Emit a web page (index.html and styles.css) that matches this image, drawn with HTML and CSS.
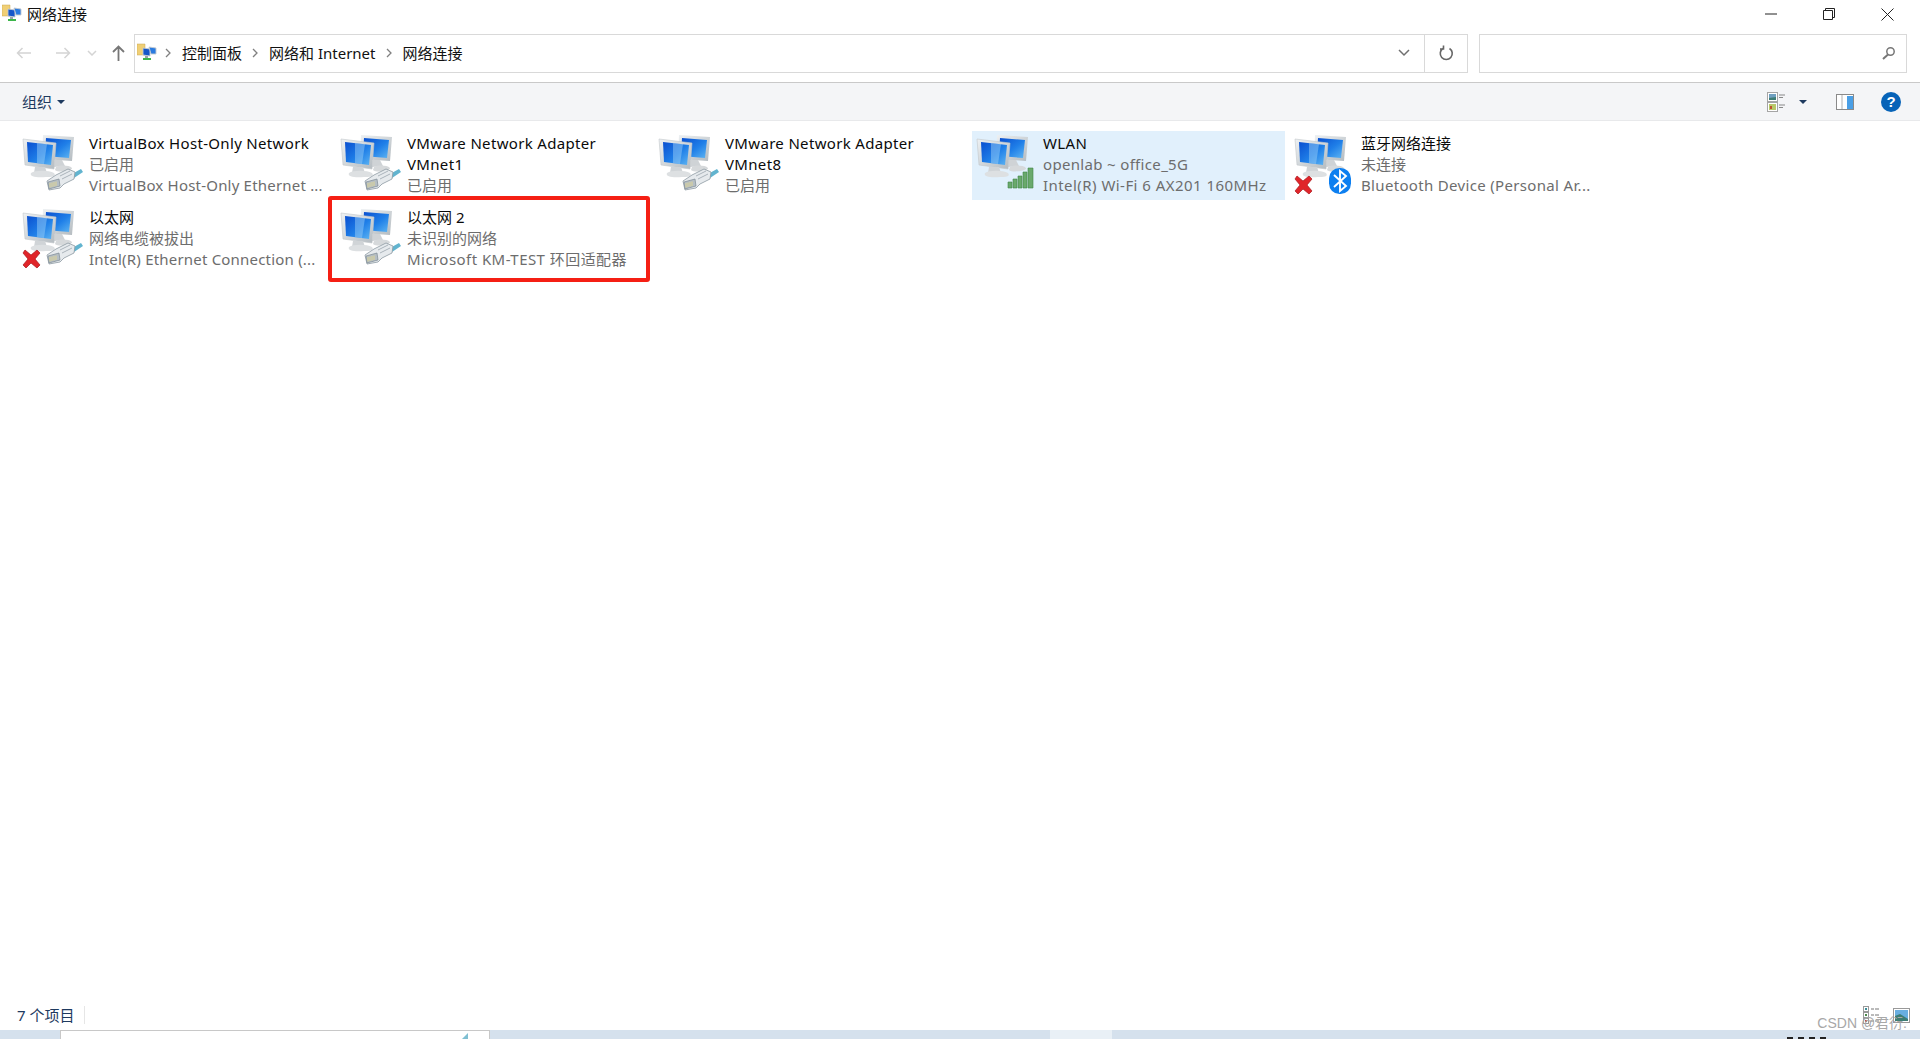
FILE: index.html
```html
<!DOCTYPE html>
<html lang="zh-CN">
<head>
<meta charset="utf-8">
<title>网络连接</title>
<link rel="stylesheet" href="styles.css">
</head>
<body>
<svg class="defs" width="0" height="0" aria-hidden="true">
  <defs>
    <linearGradient id="scr" x1="0" y1="0" x2="1" y2="1">
      <stop offset="0" stop-color="#0a4fd0"/><stop offset=".55" stop-color="#1f7fe8"/><stop offset="1" stop-color="#5db4f2"/>
    </linearGradient>
    <linearGradient id="frm" x1="0" y1="0" x2="1" y2="1">
      <stop offset="0" stop-color="#eef1f3"/><stop offset="1" stop-color="#b4bbc0"/>
    </linearGradient>
    <symbol id="pcs" viewBox="0 0 67 62">
      <path d="M21 1 52 3 50 27 20 25Z" fill="url(#frm)"/>
      <path d="M24 4 49 6 47 24 23 22Z" fill="url(#scr)"/>
      <path d="M33 26h7l3 6-11 1Z" fill="#cfd3d6"/>
      <path d="M34 33c4-2 13-2 16 1 1 3-14 5-17 2Z" fill="#d6d9db"/>
      <path d="M1 5 34 9 32 35 3 31Z" fill="url(#frm)" stroke="#c2c7cb" stroke-width=".6"/>
      <path d="M5 8 31 11 29 31 6 28Z" fill="url(#scr)"/>
      <path d="M15 9 25 10 22 30 15 29Z" fill="#a5d5f8" opacity=".45"/>
      <path d="M13 33h10l2 6H12Z" fill="#d0d4d7"/>
      <path d="M9 39c4-3 18-3 23 0 3 4-3 4-8 4-8 1-17 0-15-4Z" fill="#dde0e2"/>
    </symbol>
    <symbol id="plug" viewBox="0 0 67 62">
      <path d="M50 40 59 35 61 38 52 44Z" fill="#62b4cf"/>
      <path d="M34 41 46 35 53 38 52 45 42 50 38 54 27 56 25 47Z" fill="#e6eaed" stroke="#8d99a2" stroke-width=".8"/>
      <path d="M26 48 37 45 38 52 27 55Z" fill="#b5bec4" stroke="#7d8a94" stroke-width=".7"/>
      <path d="M28 49v4.500M30 48.500v4.500M32 48v4.500M34 47.500v4.500" stroke="#e8d98a" stroke-width=".8"/>
      <path d="M38 42 48 37M40 45 50 40" stroke="#9aa5ad" stroke-width=".8"/>
    </symbol>
    <symbol id="cross" viewBox="0 0 67 62">
      <path d="M3 42 9 47 15 42 18 45 13 51 18 57 15 60 9 55 4 60 1 57 6 51 1 45Z" fill="#e0252a" stroke="#a9181c" stroke-width=".7"/>
    </symbol>
    <symbol id="bars" viewBox="0 0 67 62">
      <path d="M32 48h4v6h-4ZM37 45h4v9h-4ZM42 42h4v12h-4ZM47 38h4v16h-4ZM52 34h5v20h-5Z" fill="#6aa96c" stroke="#3f8646" stroke-width=".6"/>
    </symbol>
    <symbol id="bt" viewBox="0 0 67 62">
      <rect x="35" y="34" width="22" height="26" rx="10.500" fill="#0d7ff0"/>
      <path d="M40 41 52 52 46 57V37L52 42 40 53" fill="none" stroke="#fff" stroke-width="1.900"/>
    </symbol>
    <symbol id="small" viewBox="0 0 20 20">
      <path d="M0 1h8v11H0Z" fill="#f0cf75" stroke="#c9a550" stroke-width=".5"/>
      <path d="M6 5 13 6 13 13 6 12Z" fill="#1556c9" stroke="#c4cad0" stroke-width=".9"/>
      <path d="M12 4 19 5 19 11 14 11Z" fill="#2a7be0" stroke="#c4cad0" stroke-width=".9"/>
      <path d="M6 15h8v2H6Z" fill="#3cb54a"/>
      <path d="M8 13h3v2H8Z" fill="#9aa3aa"/>
    </symbol>
  </defs>
</svg>

<div class="window">
  <header class="titlebar">
    <svg class="small-icon"><use href="#small"/></svg>
    <span class="title">网络连接</span>
    <div class="winbtns">
      <span class="winbtn"><svg width="12" height="12" viewBox="0 0 12 12"><path d="M0 6h12" stroke="#222" fill="none"/></svg></span>
      <span class="winbtn"><svg width="12" height="12" viewBox="0 0 12 12"><path d="M.5 2.500h9v9h-9ZM2.500 2.500v-2h9v9h-2" stroke="#222" fill="none"/></svg></span>
      <span class="winbtn"><svg width="13" height="13" viewBox="0 0 13 13"><path d="M.5.5l12 12M12.500.5l-12 12" stroke="#222" fill="none"/></svg></span>
    </div>
  </header>

  <nav class="navbar">
    <div class="navbtns">
      <svg class="nav-back" width="16" height="12" viewBox="0 0 16 12"><path d="M15 6H1.500M6.500 1l-5 5 5 5" stroke="#d4d4d4" stroke-width="1.500" fill="none"/></svg>
      <svg class="nav-fwd" width="16" height="12" viewBox="0 0 16 12"><path d="M1 6h13.500M9.500 1l5 5-5 5" stroke="#d4d4d4" stroke-width="1.500" fill="none"/></svg>
      <svg class="nav-down" width="10" height="6" viewBox="0 0 10 6"><path d="M1 1l4 4 4-4" stroke="#d4d4d4" stroke-width="1.500" fill="none"/></svg>
      <svg class="nav-up" width="13" height="16" viewBox="0 0 13 16"><path d="M6.500 16V1.500M1 7l5.500-5.500L12 7" stroke="#777" stroke-width="1.800" fill="none"/></svg>
    </div>
    <div class="address">
      <svg class="small-icon addr-icon"><use href="#small"/></svg>
      <svg class="crumb-sep" width="6" height="10" viewBox="0 0 6 10"><path d="M1 1l4 4-4 4" stroke="#808080" stroke-width="1.300" fill="none"/></svg>
      <span class="crumb">控制面板</span>
      <svg class="crumb-sep" width="6" height="10" viewBox="0 0 6 10"><path d="M1 1l4 4-4 4" stroke="#808080" stroke-width="1.300" fill="none"/></svg>
      <span class="crumb">网络和 Internet</span>
      <svg class="crumb-sep" width="6" height="10" viewBox="0 0 6 10"><path d="M1 1l4 4-4 4" stroke="#808080" stroke-width="1.300" fill="none"/></svg>
      <span class="crumb">网络连接</span>
      <svg class="addr-drop" width="12" height="8" viewBox="0 0 12 8"><path d="M1 1l5 5 5-5" stroke="#707070" stroke-width="1.500" fill="none"/></svg>
      <span class="refresh"><svg width="15" height="16" viewBox="0 0 15 16"><path d="M4 3.500a6 6 0 1 0 6.500 0M4.500 .5v3.500H1" stroke="#666" stroke-width="1.600" fill="none"/></svg></span>
    </div>
    <div class="search">
      <svg width="14" height="14" viewBox="0 0 14 14"><circle cx="8.500" cy="5.500" r="3.700" stroke="#777" stroke-width="1.500" fill="none"/><path d="M6 8.500 1 13" stroke="#777" stroke-width="2" fill="none"/></svg>
    </div>
  </nav>

  <div class="toolbar">
    <span class="organize">组织</span>
    <i class="tri"></i>
    <div class="tools">
      <svg width="20" height="20" viewBox="0 0 20 20">
        <rect x=".5" y=".5" width="10" height="9" fill="#fff" stroke="#a5a5a5"/>
        <rect x="2" y="2" width="7" height="6" fill="#6f9fc0"/>
        <path d="M2 8V6l7-1v3Z" fill="#3d7d74"/>
        <rect x=".5" y="10.500" width="10" height="9" fill="#fff" stroke="#a5a5a5"/>
        <rect x="2" y="12" width="7" height="6" fill="#b8c86a"/>
        <path d="M3 14h2v3H3Z" fill="#c0522c"/>
        <path d="M12 3h6M12 5.500h4M12 13h6M12 15.500h4" stroke="#888"/>
      </svg>
      <i class="tri view-tri"></i>
      <svg class="pane" width="18" height="16" viewBox="0 0 18 16">
        <rect x=".5" y=".5" width="17" height="15" fill="#fff" stroke="#8a8a8a"/>
        <path d="M6 1v14" stroke="#b0b0b0"/>
        <rect x="11" y="2" width="6" height="13" fill="#4a9fe6"/>
      </svg>
      <span class="help">?</span>
    </div>
  </div>

  <main class="content">
    <article class="item">
      <svg class="icon"><use href="#pcs"/><use href="#plug"/></svg>
      <div class="text">
        <div class="name lat">VirtualBox Host-Only Network</div>
        <div class="sub">已启用</div>
        <div class="sub lat tight">VirtualBox Host-Only Ethernet ...</div>
      </div>
    </article>
    <article class="item">
      <svg class="icon"><use href="#pcs"/><use href="#plug"/></svg>
      <div class="text">
        <div class="name lat wrap">VMware Network Adapter VMnet1</div>
        <div class="sub">已启用</div>
      </div>
    </article>
    <article class="item">
      <svg class="icon"><use href="#pcs"/><use href="#plug"/></svg>
      <div class="text">
        <div class="name lat wrap">VMware Network Adapter VMnet8</div>
        <div class="sub">已启用</div>
      </div>
    </article>
    <article class="item selected">
      <svg class="icon"><use href="#pcs"/><use href="#bars"/></svg>
      <div class="text">
        <div class="name lat">WLAN</div>
        <div class="sub lat">openlab ~ office_5G</div>
        <div class="sub lat wide">Intel(R) Wi-Fi 6 AX201 160MHz</div>
      </div>
    </article>
    <article class="item">
      <svg class="icon"><use href="#pcs"/><use href="#cross"/><use href="#bt"/></svg>
      <div class="text">
        <div class="name">蓝牙网络连接</div>
        <div class="sub">未连接</div>
        <div class="sub lat">Bluetooth Device (Personal Ar...</div>
      </div>
    </article>
    <article class="item">
      <svg class="icon"><use href="#pcs"/><use href="#plug"/><use href="#cross"/></svg>
      <div class="text">
        <div class="name">以太网</div>
        <div class="sub">网络电缆被拔出</div>
        <div class="sub lat tight">Intel(R) Ethernet Connection (...</div>
      </div>
    </article>
    <article class="item marked">
      <svg class="icon"><use href="#pcs"/><use href="#plug"/></svg>
      <div class="text">
        <div class="name">以太网 2</div>
        <div class="sub">未识别的网络</div>
        <div class="sub lat wide">Microsoft KM-TEST 环回适配器</div>
      </div>
      <span class="redbox"></span>
    </article>
  </main>

  <footer class="status">
    <span class="count">7 个项目</span>
    <div class="status-icons">
      <svg width="17" height="18" viewBox="0 0 17 18">
        <rect x=".5" y=".5" width="5" height="5" fill="#fff" stroke="#999"/><rect x="2" y="2" width="2" height="2" fill="#3b8d99"/>
        <rect x=".5" y="6.500" width="5" height="5" fill="#fff" stroke="#999"/><rect x="2" y="8" width="2" height="2" fill="#4c8a4c"/>
        <rect x=".5" y="12.500" width="5" height="5" fill="#fff" stroke="#999"/><rect x="2" y="14" width="2" height="2" fill="#c0522c"/>
        <path d="M8 3h3M12 3h4M8 9h3M12 9h4M8 15h3M12 15h4" stroke="#777"/>
      </svg>
      <svg width="17" height="15" viewBox="0 0 17 15">
        <rect x=".5" y=".5" width="16" height="14" fill="#fff" stroke="#999"/>
        <rect x="2" y="2" width="13" height="11" fill="#69aee0"/>
        <path d="M2 13V8l5-2 8 5v2Z" fill="#3d7d74"/>
      </svg>
    </div>
    <span class="watermark">CSDN @君衍.</span>
  </footer>

  <div class="taskbar">
    <div class="tab"><i class="tab-arrow"></i></div>
    <div class="task-light"></div>
    <div class="clock-bits"><i></i><i></i><i></i><i></i></div>
  </div>
</div>
</body>
</html>
```
FILE: styles.css
```css
* { box-sizing: border-box; }
html, body { margin: 0; height: 100%; overflow: hidden; background: #fff; }
body { font-family: "Noto Sans", "Noto Sans CJK SC", sans-serif; font-size: 15px; color: #111; }
.defs { position: absolute; }
.window { display: flex; flex-direction: column; height: 1039px; }

.titlebar { display: flex; align-items: center; height: 34px; padding: 0 4px 6px 2px; }
.small-icon { width: 20px; height: 20px; flex: none; }
.title { margin-left: 5px; line-height: 20px; }
.winbtns { display: flex; margin-left: auto; }
.winbtn { display: flex; align-items: center; justify-content: center; width: 58px; height: 24px; }

.navbar { display: flex; align-items: center; height: 49px; padding: 0 12px 10px 16px; border-bottom: 1px solid #c9c9c9; }
.navbtns { display: flex; align-items: center; width: 118px; flex: none; }
.nav-back { margin-right: 23px; }
.nav-fwd { margin-right: 16px; }
.nav-down { margin-right: 15px; }
.address { display: flex; align-items: center; width: 1334px; height: 39px; border: 1px solid #d9d9d9; padding-left: 2px; flex: none; }
.addr-icon { margin-right: 8px; }
.crumb-sep { flex: none; margin-right: 11px; }
.crumb { margin-right: 10px; line-height: 20px; white-space: nowrap; }
.addr-drop { margin-left: auto; margin-right: 14px; }
.refresh { display: flex; align-items: center; justify-content: center; width: 43px; height: 100%; border-left: 1px solid #d9d9d9; }
.search { display: flex; align-items: center; justify-content: flex-end; width: 428px; height: 39px; margin-left: 11px; border: 1px solid #d9d9d9; padding-right: 10px; flex: none; }

.toolbar { display: flex; align-items: center; height: 38px; padding: 0 19px 0 22px; background: #f4f5f7; border-bottom: 1px solid #e8e9eb; }
.organize { color: #1e3a5f; line-height: 20px; }
.tri { display: block; width: 0; height: 0; margin-left: 5px; border-style: solid; border-width: 4px 4px 0; border-color: #1e3a5f transparent transparent; }
.tools { display: flex; align-items: center; margin-left: auto; }
.view-tri { margin-left: 12px; }
.pane { margin-left: 29px; }
.help { display: flex; align-items: center; justify-content: center; width: 20px; height: 20px; margin-left: 27px; border-radius: 50%; background: #0763b8; color: #fff; font: bold 15px "Liberation Sans", sans-serif; }

.content { flex: 1; display: grid; grid-template-columns: repeat(5, 313px); grid-auto-rows: 69px; column-gap: 5px; row-gap: 5px; align-content: start; padding: 10px 0 0 18px; }
.item { position: relative; display: flex; padding: 3px 0 0 4px; }
.item.selected { background: #e1f0fc; }
.icon { width: 67px; height: 62px; flex: none; }
.text { width: 236px; margin-top: -1px; line-height: 20.800px; white-space: nowrap; }
.name { color: #0a0a0a; }
.name.wrap { white-space: normal; }
.sub { color: #6d6d6d; }
.lat { letter-spacing: .33px; }
.lat.tight { letter-spacing: .2px; }
.lat.wide { letter-spacing: .45px; }
.redbox { position: absolute; left: -8px; top: -9px; width: 322px; height: 86px; border: 4px solid #f51f14; border-radius: 3px; pointer-events: none; }

.status { position: relative; display: flex; align-items: center; height: 30px; padding: 0 10px 0 17px; }
.count { color: #1e3a5f; padding-right: 10px; border-right: 1px solid #e6e6e6; line-height: 18px; }
.status-icons { display: flex; align-items: center; gap: 13px; margin-left: auto; }
.watermark { position: absolute; right: 13px; bottom: -1px; color: #a8a8a8; font: 14px/16px "Liberation Sans", "Noto Sans CJK SC", sans-serif; }

.taskbar { display: flex; height: 9px; overflow: hidden; background: #d5e1ed; border-right: 5px solid #d5e1ed; }
.tab { position: relative; width: 430px; margin-left: 60px; background: #fff; border: 1px solid #c8c8c8; border-bottom: 0; }
.tab-arrow { position: absolute; right: 21px; bottom: 0; width: 0; height: 0; border-style: solid; border-width: 0 0 6px 6px; border-color: transparent transparent #7fbfd2; }
.task-light { width: 62px; margin-left: 560px; background: #e9f0f6; }
.clock-bits { display: flex; gap: 5px; align-self: flex-end; margin-left: 675px; }
.clock-bits i { display: block; width: 6px; height: 2px; background: #222; }
```
